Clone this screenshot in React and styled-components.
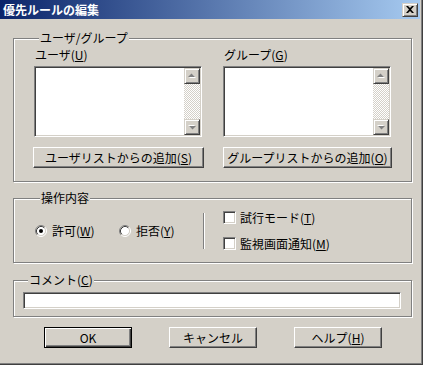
import React from "react";
import styled, { createGlobalStyle, css } from "styled-components";

const GlobalStyle = createGlobalStyle`
  html, body {
    margin: 0;
    padding: 0;
    background: #d4d0c8;
  }
  body {
    font-family: "Noto Sans CJK JP", "Noto Sans", sans-serif;
    font-size: 12px;
    line-height: 14px;
    color: #000;
  }
`;

const raised = css`
  border: 1px solid;
  border-color: #d4d0c8 #404040 #404040 #d4d0c8;
  box-shadow: inset 1px 1px 0 #fff, inset -1px -1px 0 #808080;
  background: #d4d0c8;
`;

const sunken = css`
  border: 1px solid;
  border-color: #808080 #fff #fff #808080;
  box-shadow: inset 1px 1px 0 #404040, inset -1px -1px 0 #d4d0c8;
  background: #fff;
`;

const Window = styled.div`
  width: 423px;
  height: 365px;
  box-sizing: border-box;
  background: #d4d0c8;
  border-right: 1px solid #404040;
  border-bottom: 1px solid #404040;
  box-shadow: inset -1px -1px 0 #808080;
  display: flex;
  flex-direction: column;
`;

const TitleBar = styled.div`
  height: 19px;
  margin-right: 2px;
  padding: 0 2px 0 3px;
  display: flex;
  align-items: center;
  justify-content: space-between;
  background: linear-gradient(to right, #0a246a, #a6caf0);
`;

const TitleText = styled.span`
  color: #fff;
  font-weight: bold;
  font-size: 12px;
  letter-spacing: 0;
`;

const CloseButton = styled.div`
  ${raised};
  width: 16px;
  height: 14px;
  box-sizing: border-box;
  display: flex;
  align-items: center;
  justify-content: center;
`;

const Body = styled.div`
  padding: 12px 0 0 13px;
  display: flex;
  flex-direction: column;
`;

const GroupBox = styled.fieldset`
  margin: ${(p) => p.$gap || 0}px 0 0 0;
  padding: ${(p) => p.$pad};
  width: 399px;
  min-width: 0;
  box-sizing: border-box;
  border: 1px solid #808080;
  box-shadow: inset 1px 1px 0 #fff, 1px 1px 0 #fff;
`;

const Legend = styled.legend`
  margin-left: 5px;
  padding: 0 1px;
  line-height: 14px;
  background: #d4d0c8;
`;

const Key = styled.span`
  text-decoration: underline;
  text-underline-offset: 1px;
`;

const Columns = styled.div`
  display: grid;
  grid-template-columns: 168px 168px;
  column-gap: 21px;
`;

const Column = styled.div`
  display: flex;
  flex-direction: column;
`;

const FieldLabel = styled.div`
  padding-left: 1px;
  height: 14px;
`;

const ListBox = styled.div`
  ${sunken};
  margin-top: 4px;
  height: 71px;
  box-sizing: border-box;
  padding: 1px;
  display: flex;
  justify-content: flex-end;
`;

const ScrollBar = styled.div`
  width: 16px;
  display: flex;
  flex-direction: column;
`;

const ScrollArrow = styled.div`
  ${raised};
  width: 16px;
  height: 16px;
  box-sizing: border-box;
  display: flex;
  align-items: center;
  justify-content: center;
`;

const ScrollTrack = styled.div`
  flex: 1;
  background-color: #d4d0c8;
  background-image: conic-gradient(#fff 25%, #d4d0c8 0 50%, #fff 0 75%, #d4d0c8 0);
  background-size: 2px 2px;
`;

const PushButton = styled.button`
  font: inherit;
  color: #000;
  height: 21px;
  width: ${(p) => p.$width}px;
  margin-left: ${(p) => p.$shift || 0}px;
  padding: 0;
  background: #d4d0c8;
  border: 1px solid;
  border-color: #fff #404040 #404040 #fff;
  box-shadow: inset -1px -1px 0 #808080;
  display: flex;
  align-items: center;
  justify-content: center;
  ${(p) =>
    p.$default &&
    css`
      border-color: #000;
      box-shadow: inset 1px 1px 0 #fff, inset -1px -1px 0 #404040,
        inset -2px -2px 0 #808080;
    `}
`;

const AddButton = styled(PushButton)`
  margin-top: 10px;
`;

const OptionRow = styled.div`
  display: flex;
  align-items: center;
`;

const RadioGroup = styled.div`
  width: 168px;
  display: flex;
`;

const RadioItem = styled.label`
  width: 85px;
  display: flex;
  align-items: center;
  gap: 5px;
`;

const Separator = styled.div`
  width: 0;
  height: 36px;
  border-left: 1px solid #808080;
  border-right: 1px solid #fff;
`;

const CheckList = styled.div`
  margin-left: 18px;
  display: flex;
  flex-direction: column;
  gap: 13px;
`;

const CheckItem = styled.label`
  height: 13px;
  display: flex;
  align-items: center;
  gap: 4px;
`;

const CheckBox = styled.span`
  ${sunken};
  width: 13px;
  height: 13px;
  box-sizing: border-box;
`;

const TextInput = styled.div`
  ${sunken};
  width: 378px;
  height: 17px;
  box-sizing: border-box;
`;

const ButtonRow = styled.div`
  margin-top: 10px;
  padding-left: 31px;
  display: flex;
  gap: 37px;
`;

const Radio = ({ checked }) => (
  <svg width="12" height="12" viewBox="0 0 12 12">
    <circle cx="6" cy="6" r="4.5" fill="#fff" />
    <path d="M2.11 9.89A5.5 5.5 0 0 1 9.89 2.11" fill="none" stroke="#808080" />
    <path d="M9.89 2.11A5.5 5.5 0 0 1 2.11 9.89" fill="none" stroke="#fff" />
    <path d="M2.82 9.18A4.5 4.5 0 0 1 9.18 2.82" fill="none" stroke="#404040" />
    <path d="M9.18 2.82A4.5 4.5 0 0 1 2.82 9.18" fill="none" stroke="#d4d0c8" />
    {checked && <circle cx="6" cy="6" r="2" fill="#000" />}
  </svg>
);

const Arrow = ({ down }) => (
  <svg width="8" height="6" viewBox="0 0 8 6">
    <g transform={down ? "rotate(180 4 3)" : undefined}>
      <polygon points="1,5 4.5,1.5 8,5" fill="#fff" />
      <polygon points="0,4 3.5,0.5 7,4" fill="#808080" />
    </g>
  </svg>
);

const ListWithScroll = () => (
  <ListBox>
    <ScrollBar>
      <ScrollArrow>
        <Arrow />
      </ScrollArrow>
      <ScrollTrack />
      <ScrollArrow>
        <Arrow down />
      </ScrollArrow>
    </ScrollBar>
  </ListBox>
);

export default function App() {
  return (
    <>
      <GlobalStyle />
      <Window>
        <TitleBar>
          <TitleText>優先ルールの編集</TitleText>
          <CloseButton>
            <svg width="8" height="7" viewBox="0 0 8 7">
              <path
                d="M0 0h2l2 2 2-2h2L5 3.5 8 7H6L4 5 2 7H0l3-3.5z"
                fill="#000"
              />
            </svg>
          </CloseButton>
        </TitleBar>

        <Body>
          <GroupBox $pad="3px 0 13px 20px">
            <Legend>ユーザ/グループ</Legend>
            <Columns>
              <Column>
                <FieldLabel>
                  ユーザ(<Key>U</Key>)
                </FieldLabel>
                <ListWithScroll />
                <AddButton $width={171} $shift={-1}>
                  ユーザリストからの追加(<Key>S</Key>)
                </AddButton>
              </Column>
              <Column>
                <FieldLabel>
                  グループ(<Key>G</Key>)
                </FieldLabel>
                <ListWithScroll />
                <AddButton $width={169}>
                  グループリストからの追加(<Key>O</Key>)
                </AddButton>
              </Column>
            </Columns>
          </GroupBox>

          <GroupBox $gap={9} $pad="6px 0 12px 21px">
            <Legend>操作内容</Legend>
            <OptionRow>
              <RadioGroup>
                <RadioItem>
                  <Radio checked />
                  <span>
                    許可(<Key>W</Key>)
                  </span>
                </RadioItem>
                <RadioItem>
                  <Radio />
                  <span>
                    拒否(<Key>Y</Key>)
                  </span>
                </RadioItem>
              </RadioGroup>
              <Separator />
              <CheckList>
                <CheckItem>
                  <CheckBox />
                  <span>
                    試行モード(<Key>T</Key>)
                  </span>
                </CheckItem>
                <CheckItem>
                  <CheckBox />
                  <span>
                    監視画面通知(<Key>M</Key>)
                  </span>
                </CheckItem>
              </CheckList>
            </OptionRow>
          </GroupBox>

          <GroupBox $gap={10} $pad="5px 0 7px 9px">
            <Legend>
              コメント(<Key>C</Key>)
            </Legend>
            <TextInput />
          </GroupBox>

          <ButtonRow>
            <PushButton $width={88} $default>
              OK
            </PushButton>
            <PushButton $width={88}>キャンセル</PushButton>
            <PushButton $width={88}>
              ヘルプ(<Key>H</Key>)
            </PushButton>
          </ButtonRow>
        </Body>
      </Window>
    </>
  );
}
